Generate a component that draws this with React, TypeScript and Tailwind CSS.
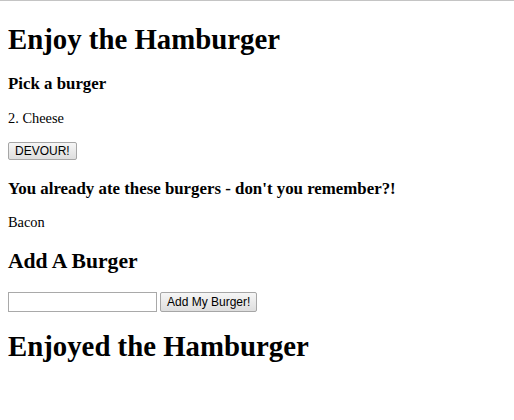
import React from 'react';

export default function App() {
  const devoured = ['Bacon'];

  return (
    <div className="min-h-[420px] bg-white text-black font-['Liberation_Serif',serif]">
      <div className="h-px bg-[#c4c4c4]" />
      <div className="px-2">
        <h1 className="mt-[22px] text-[28.8px] leading-[32px] font-bold">Enjoy the Hamburger</h1>

        <h3 className="mt-[19px] text-[16.85px] leading-[19px] font-bold">Pick a burger</h3>
        <p className="mt-[17px] text-[14.4px] leading-[16px]">2. Cheese</p>
        <button className="mt-4 h-[18px] px-[6px] border border-[#a6a6a6] rounded-[2px] bg-gradient-to-b from-[#f6f6f6] to-[#dedede] font-['Liberation_Sans',sans-serif] text-[12px] leading-[14px] text-black">
          DEVOUR!
        </button>

        <h3 className="mt-[17px] text-[16.85px] leading-[19px] font-bold">
          You already ate these burgers - don't you remember?!
        </h3>
        {devoured.map((b) => (
          <p key={b} className="mt-4 text-[14.4px] leading-[16px]">{b}</p>
        ))}

        <h2 className="mt-[19px] text-[21.6px] leading-[24px] font-bold">Add A Burger</h2>
        <form className="mt-[19px] flex items-center gap-[3px]" onSubmit={(e) => e.preventDefault()}>
          <input
            type="text"
            className="w-[149px] h-5 border border-[#a9a9a9] bg-white px-[2px] text-[12px] outline-none"
          />
          <button className="h-5 px-[6px] border border-[#a6a6a6] rounded-[2px] bg-gradient-to-b from-[#f6f6f6] to-[#dedede] font-['Liberation_Sans',sans-serif] text-[12px] leading-[14px] text-black">
            Add My Burger!
          </button>
        </form>

        <h1 className="mt-[18px] text-[28.8px] leading-[32px] font-bold">Enjoyed the Hamburger</h1>
      </div>
    </div>
  );
}
